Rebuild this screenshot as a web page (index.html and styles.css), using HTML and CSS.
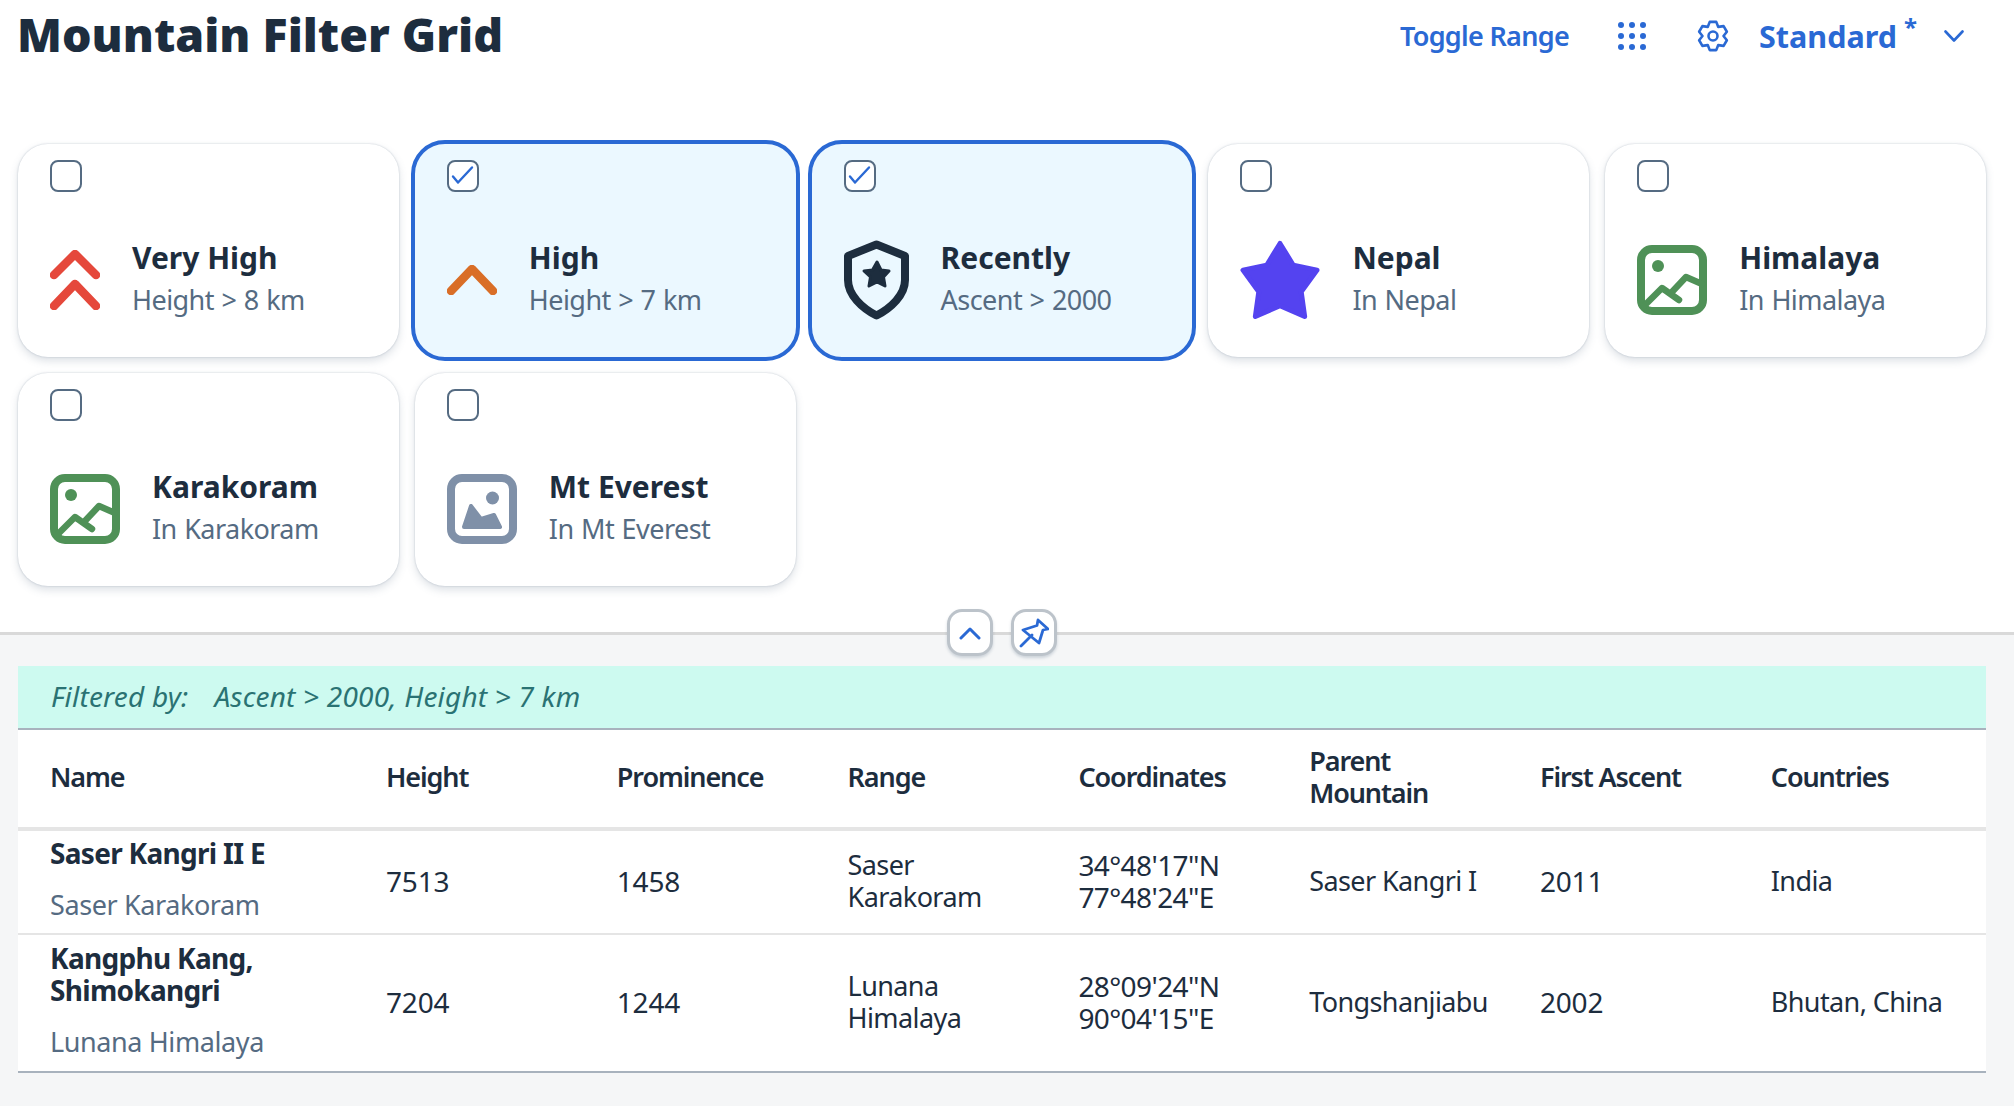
FILE: index.html
```html
<!DOCTYPE html>
<html lang="en">

<head>
  <meta charset="UTF-8">
  <meta name="viewport" content="width=device-width, initial-scale=1.0">
  <title>Mountain Filter Grid</title>
  <link rel="stylesheet" href="styles.css">
</head>

<body>
  <header class="page-header">
    <div class="title-bar">
      <h1 class="page-title">Mountain Filter Grid</h1>
      <div class="title-actions">
        <span class="link-button">Toggle Range</span>
        <svg class="icon-dots" viewBox="0 0 28 28" width="28" height="28">
          <g fill="#2a69d4">
            <circle cx="3" cy="3" r="3" /><circle cx="14" cy="3" r="3" /><circle cx="25" cy="3" r="3" />
            <circle cx="3" cy="14" r="3" /><circle cx="14" cy="14" r="3" /><circle cx="25" cy="14" r="3" />
            <circle cx="3" cy="25" r="3" /><circle cx="14" cy="25" r="3" /><circle cx="25" cy="25" r="3" />
          </g>
        </svg>
        <svg class="icon-gear" viewBox="0 0 32 32" width="32" height="32" fill="none" stroke="#2a69d4" stroke-width="2.6" stroke-linejoin="round">
          <path d="M12.74 1.88 19.26 1.88 21.25 6.91 26.6 6.11 29.87 11.77 26.5 16 29.87 20.23 26.6 25.89 21.25 25.09 19.26 30.12 12.74 30.12 10.75 25.09 5.4 25.89 2.13 20.23 5.5 16 2.13 11.77 5.4 6.11 10.75 6.91Z" />
          <circle cx="16" cy="16" r="4.5" />
        </svg>
        <span class="variant-name">Standard<span class="variant-dirty">*</span></span>
        <svg class="icon-caret" viewBox="0 0 20 12" width="20" height="12" fill="none" stroke="#2a69d4" stroke-width="2.6" stroke-linecap="round" stroke-linejoin="round">
          <path d="M1.5 1.5 10 10.5 18.5 1.5" />
        </svg>
      </div>
    </div>

    <div class="card-grid">
      <div class="card">
        <span class="checkbox"></span>
        <div class="card-body">
          <svg viewBox="0 0 50 60" width="50" height="60" fill="none" stroke="#e5483b" stroke-width="8.5" stroke-linecap="round" stroke-linejoin="round">
            <path d="M4 25 25 4 46 25" />
            <path d="M4 56 25 34 46 56" />
          </svg>
          <div class="card-text">
            <div class="card-title">Very High</div>
            <div class="card-sub">Height &gt; 8 km</div>
          </div>
        </div>
      </div>

      <div class="card card-selected">
        <span class="checkbox">
          <svg viewBox="0 0 28 28" width="28" height="28" fill="none" stroke="#2a69d4" stroke-width="2.4" stroke-linecap="round" stroke-linejoin="round">
            <path d="M4 14.5 9 20.5 23 5.5" />
          </svg>
        </span>
        <div class="card-body">
          <svg viewBox="0 0 50 30" width="50" height="30" fill="none" stroke="#d96e27" stroke-width="8.5" stroke-linecap="round" stroke-linejoin="round">
            <path d="M4 26 25 4 46 26" />
          </svg>
          <div class="card-text">
            <div class="card-title">High</div>
            <div class="card-sub">Height &gt; 7 km</div>
          </div>
        </div>
      </div>

      <div class="card card-selected">
        <span class="checkbox">
          <svg viewBox="0 0 28 28" width="28" height="28" fill="none" stroke="#2a69d4" stroke-width="2.4" stroke-linecap="round" stroke-linejoin="round">
            <path d="M4 14.5 9 20.5 23 5.5" />
          </svg>
        </span>
        <div class="card-body">
          <svg viewBox="0 0 65 80" width="65" height="80">
            <path d="M32.5 4.5 61 16V40C61 55 47 68 32.5 75.5 18 68 4 55 4 40V16Z" fill="none" stroke="#1d2d3e" stroke-width="8" stroke-linejoin="round" />
            <path d="M33 22 37 30 45 31 39.500 37 41 46 33 42 25 46 26.500 37 20 31 28.500 30Z" fill="#1d2d3e" stroke="#1d2d3e" stroke-width="3" stroke-linejoin="round" />
          </svg>
          <div class="card-text">
            <div class="card-title">Recently</div>
            <div class="card-sub">Ascent &gt; 2000</div>
          </div>
        </div>
      </div>

      <div class="card">
        <span class="checkbox"></span>
        <div class="card-body">
          <svg viewBox="0 0 81 80" width="80" height="80">
            <path d="M40.500 3 54 25 78 30 62 52 65.500 77 40.500 66 15.500 77 19 52 3 30 27 25Z" fill="#5443f0" stroke="#5443f0" stroke-width="5" stroke-linejoin="round" />
          </svg>
          <div class="card-text">
            <div class="card-title">Nepal</div>
            <div class="card-sub">In Nepal</div>
          </div>
        </div>
      </div>

      <div class="card">
        <span class="checkbox"></span>
        <div class="card-body">
          <svg viewBox="0 0 70 70" width="70" height="70" fill="none" stroke="#4f9157" stroke-width="6.500" stroke-linecap="round" stroke-linejoin="round">
            <rect x="4" y="4" width="62" height="62" rx="11" stroke-width="8" />
            <circle cx="21" cy="21" r="6" fill="#4f9157" stroke="none" />
            <path d="M7 61 25 43 42 55M34 48 49 32 65 39" />
          </svg>
          <div class="card-text">
            <div class="card-title">Himalaya</div>
            <div class="card-sub">In Himalaya</div>
          </div>
        </div>
      </div>

      <div class="card">
        <span class="checkbox"></span>
        <div class="card-body">
          <svg viewBox="0 0 70 70" width="70" height="70" fill="none" stroke="#4f9157" stroke-width="6.500" stroke-linecap="round" stroke-linejoin="round">
            <rect x="4" y="4" width="62" height="62" rx="11" stroke-width="8" />
            <circle cx="21" cy="21" r="6" fill="#4f9157" stroke="none" />
            <path d="M7 61 25 43 42 55M34 48 49 32 65 39" />
          </svg>
          <div class="card-text">
            <div class="card-title">Karakoram</div>
            <div class="card-sub">In Karakoram</div>
          </div>
        </div>
      </div>

      <div class="card">
        <span class="checkbox"></span>
        <div class="card-body">
          <svg viewBox="0 0 70 70" width="70" height="70" fill="none">
            <rect x="4" y="4" width="62" height="62" rx="11" stroke="#7f90a8" stroke-width="8" />
            <circle cx="45.500" cy="24" r="6.500" fill="#7f90a8" />
            <path d="M17 53 24 32 34 45 47 41 53 53Z" fill="#7f90a8" stroke="#7f90a8" stroke-width="4" stroke-linejoin="round" />
          </svg>
          <div class="card-text">
            <div class="card-title">Mt Everest</div>
            <div class="card-sub">In Mt Everest</div>
          </div>
        </div>
      </div>
    </div>
  </header>

  <div class="collapse-bar">
    <button type="button" class="bar-button">
      <svg viewBox="0 0 22 14" width="22" height="14" fill="none" stroke="#2a69d4" stroke-width="3" stroke-linecap="round" stroke-linejoin="round">
        <path d="M2 12 11 3 20 12" />
      </svg>
    </button>
    <button type="button" class="bar-button">
      <svg viewBox="0 0 30 30" width="30" height="30" fill="none" stroke="#2a69d4" stroke-width="2.8" stroke-linecap="round" stroke-linejoin="round">
        <path d="M2 28 13 17M4 12 18 7.500 19 2 29 11 24 12 20 25Z" />
      </svg>
    </button>
  </div>

  <main class="content">
    <div class="filter-strip"><span class="filter-label">Filtered by:</span>Ascent &gt; 2000, Height &gt; 7 km</div>
    <table class="mountain-table">
      <colgroup>
        <col class="col-name">
        <col class="col-std">
        <col class="col-std">
        <col class="col-std">
        <col class="col-std">
        <col class="col-std">
        <col class="col-std">
        <col>
      </colgroup>
      <thead>
        <tr>
          <th>Name</th>
          <th>Height</th>
          <th>Prominence</th>
          <th>Range</th>
          <th>Coordinates</th>
          <th>Parent<br>Mountain</th>
          <th>First Ascent</th>
          <th>Countries</th>
        </tr>
      </thead>
      <tbody>
        <tr class="row-one">
          <td class="cell-name">
            <div class="mountain-name">Saser Kangri II E</div>
            <div class="mountain-range">Saser Karakoram</div>
          </td>
          <td class="num">7513</td>
          <td class="num">1458</td>
          <td>Saser<br>Karakoram</td>
          <td class="num coord">34°48'17"N<br>77°48'24"E</td>
          <td>Saser Kangri I</td>
          <td class="num">2011</td>
          <td>India</td>
        </tr>
        <tr class="row-two">
          <td class="cell-name">
            <div class="mountain-name">Kangphu Kang,<br>Shimokangri</div>
            <div class="mountain-range">Lunana Himalaya</div>
          </td>
          <td class="num">7204</td>
          <td class="num">1244</td>
          <td>Lunana<br>Himalaya</td>
          <td class="num coord">28°09'24"N<br>90°04'15"E</td>
          <td>Tongshanjiabu</td>
          <td class="num">2002</td>
          <td>Bhutan, China</td>
        </tr>
      </tbody>
    </table>
  </main>
</body>

</html>
```

FILE: styles.css
```css
* {
  box-sizing: border-box;
}

html,
body {
  margin: 0;
  height: 100%;
}

body {
  font-family: "Noto Sans", Arial, sans-serif;
  font-size: 28px;
  line-height: 32px;
  color: #1d2d3e;
  background-color: #f5f6f7;
  overflow: hidden;
}

.page-header {
  background-color: #fff;
  height: 635px;
  padding: 0 28px 0 18px;
  border-bottom: 3px solid #d9d9d9;
}

.title-bar {
  display: flex;
  align-items: center;
  justify-content: space-between;
  height: 72px;
  margin-bottom: 72px;
}

.page-title {
  margin: 0 0 3px -1px;
  font-size: 46.5px;
  line-height: 67px;
  font-weight: 900;
}

.title-actions {
  display: flex;
  align-items: center;
  color: #2a69d4;
  padding-right: 22px;
}

.link-button {
  font-size: 27px;
  font-weight: 600;
  letter-spacing: -0.7px;
}

.icon-dots {
  margin-left: 49px;
}

.icon-gear {
  margin-left: 51px;
}

.variant-name {
  margin-left: 30px;
  font-size: 30.5px;
  font-weight: 700;
}

.variant-dirty {
  font-size: 24px;
  vertical-align: 12px;
  line-height: 0;
  margin-left: 7px;
}

.icon-caret {
  margin-left: 27px;
}

.card-grid {
  display: grid;
  grid-template-columns: repeat(5, 1fr);
  gap: 16px;
}

.card {
  height: 213px;
  padding: 16px 32px 0;
  border-radius: 30px;
  background-color: #fff;
  box-shadow: 0 0 2px rgba(85, 107, 130, 0.35), 0 4px 8px rgba(85, 107, 130, 0.2);
}

.card-selected {
  background-color: #ebf8ff;
  box-shadow: none;
  outline: 4px solid #2a69d4;
}

.checkbox {
  display: flex;
  align-items: center;
  justify-content: center;
  width: 32px;
  height: 32px;
  border: 2px solid #556b82;
  border-radius: 8px;
  background-color: #fff;
}

.card-body {
  display: flex;
  align-items: center;
  gap: 32px;
  height: 84px;
  margin-top: 46px;
}

.card-text {
  padding-bottom: 3px;
}

.card-title {
  font-size: 30px;
  line-height: 42px;
  font-weight: 700;
}

.card-sub {
  font-size: 27px;
  line-height: 42px;
  letter-spacing: -0.55px;
  word-spacing: 1px;
  color: #556b82;
}

.collapse-bar {
  display: flex;
  justify-content: center;
  gap: 18px;
  margin: -26px 28px 10px 18px;
}

.bar-button {
  display: flex;
  align-items: center;
  justify-content: center;
  width: 46px;
  height: 47px;
  padding: 0;
  border: 3px solid #bcc3ca;
  border-radius: 15px;
  background-color: #fff;
  box-shadow: 0 2px 3px rgba(85, 107, 130, 0.25);
}

.content {
  padding: 0 28px 0 18px;
}

.filter-strip {
  height: 64px;
  padding-left: 33px;
  line-height: 60px;
  font-style: italic;
  letter-spacing: 0.2px;
  color: #2a7273;
  background-color: #cdfaf0;
  border-bottom: 2px solid #a8b2bd;
}

.filter-label {
  margin-right: 26px;
}

.mountain-table {
  width: 100%;
  table-layout: fixed;
  border-collapse: collapse;
  background-color: #fff;
}

.col-name {
  width: 336px;
}

.col-std {
  width: 230.8px;
}

.mountain-table th,
.mountain-table td {
  padding: 0 0 3px 32px;
  text-align: left;
  vertical-align: middle;
  font-size: 27px;
  letter-spacing: -0.6px;
}

.mountain-table th {
  height: 99px;
  font-weight: 600;
  letter-spacing: -1.1px;
  border-bottom: 4px solid #e5e5e5;
}

.mountain-table td.num {
  font-size: 28px;
  letter-spacing: -0.2px;
}

.mountain-table td.coord {
  letter-spacing: -0.6px;
}

.mountain-table td.cell-name {
  padding-bottom: 6px;
}

.row-one td {
  height: 105px;
  border-bottom: 2px solid #e5e5e5;
}

.row-two td {
  height: 138px;
  border-bottom: 2px solid #a8b2bd;
}

.mountain-name {
  font-size: 28px;
  font-weight: 700;
  letter-spacing: -0.7px;
}

.mountain-range {
  margin-top: 20px;
  letter-spacing: -0.4px;
  color: #556b82;
}
```
